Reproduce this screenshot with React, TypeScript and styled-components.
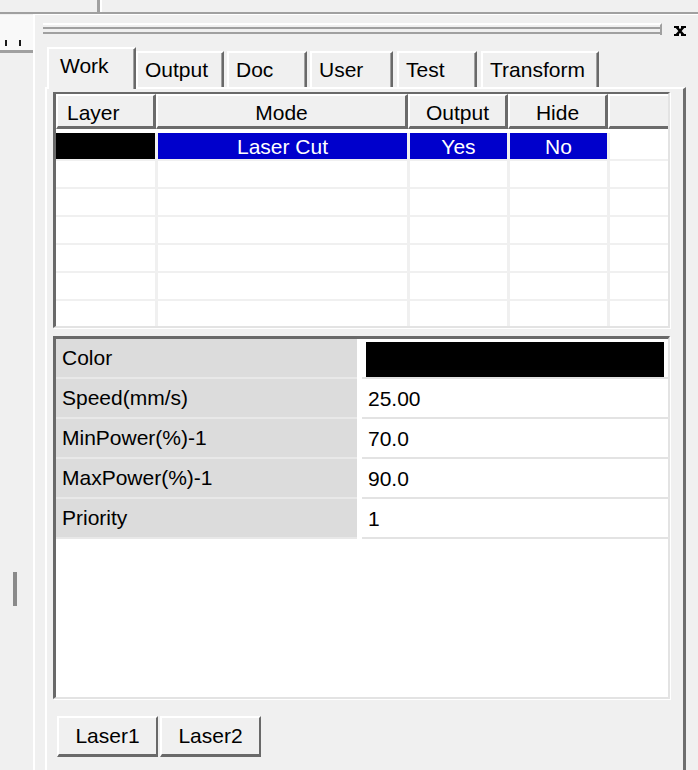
import styled, { createGlobalStyle } from 'styled-components';

const GlobalStyle = createGlobalStyle`
  html, body {
    margin: 0;
    padding: 0;
    background: #f0f0f0;
  }
  body {
    font-family: 'Liberation Sans', Arial, sans-serif;
    font-size: 21px;
    color: #000;
  }
  * {
    box-sizing: border-box;
  }
`;

const Page = styled.div`
  width: 698px;
  height: 770px;
  overflow: hidden;
  background: #f0f0f0;
  display: flex;
  flex-direction: column;
`;

const TopStrip = styled.div`
  height: 14px;
  flex-shrink: 0;
  display: flex;
  border-bottom: 2px solid #a0a0a0;
`;

const TopLeft = styled.div`
  width: 100px;
  border-right: 3px solid #a0a0a0;
`;

const TopRight = styled.div`
  flex: 1;
  border-left: 2px solid #fff;
`;

const Body = styled.div`
  flex: 1;
  min-height: 0;
  display: flex;
`;

const LeftPane = styled.div`
  width: 33px;
  flex-shrink: 0;
  display: flex;
  flex-direction: column;
`;

const Ruler = styled.div`
  margin-top: 1px;
  height: 38px;
  background: #f9f9f9;
  border-bottom: 3px solid #a0a0a0;
  display: flex;
  align-items: flex-end;
  gap: 12px;
  padding: 0 0 4px 5px;
`;

const Tick = styled.span`
  width: 2px;
  height: 6px;
  background: #1a1a1a;
`;

const Thumb = styled.div`
  margin: 519px 0 0 13px;
  width: 4px;
  height: 34px;
  background: #8a8a8a;
`;

const Dock = styled.div`
  flex: 1;
  min-width: 0;
  display: flex;
  flex-direction: column;
  border-left: 2px solid #fff;
  border-top: 1px solid #fff;
  padding: 8px 12px 0 8px;
`;

const GripRow = styled.div`
  display: flex;
  align-items: flex-start;
  height: 12px;
  flex-shrink: 0;
`;

const Grip = styled.div`
  flex: 1;
  height: 12px;
  border-top: 2px solid #fff;
  border-right: 2px solid #a0a0a0;
  padding-top: 2px;
  display: flex;
  flex-direction: column;
  gap: 3px;
`;

const GripLine = styled.div`
  height: 2px;
  background: #a0a0a0;
`;

const Close = styled.svg`
  margin: 3px 0 0 12px;
  width: 12px;
  height: 10px;
  flex-shrink: 0;
`;

const TabArea = styled.div`
  margin: 12px 0 0 2px;
  flex: 1;
  min-height: 0;
  display: flex;
  flex-direction: column;
`;

const TabBar = styled.div`
  height: 40px;
  flex-shrink: 0;
  display: flex;
  align-items: flex-end;
  padding-left: 2px;
`;

const Tab = styled.div<{ $active?: boolean; $w: number; $gap: number }>`
  position: relative;
  z-index: 1;
  width: ${({ $w }) => $w}px;
  height: ${({ $active }) => ($active ? 42 : 36)}px;
  margin-left: ${({ $gap }) => $gap}px;
  margin-bottom: ${({ $active }) => ($active ? -2 : 0)}px;
  background: #f0f0f0;
  border-top: 2px solid #fff;
  border-left: 2px solid #fff;
  border-right: 2px solid #696969;
  box-shadow: inset -1px 0 0 #a0a0a0;
  padding: 5px 0 0 ${({ $active }) => ($active ? 11 : 7)}px;
  line-height: 24px;
  white-space: nowrap;
`;

const TabPage = styled.div`
  flex: 1;
  min-height: 0;
  display: flex;
  flex-direction: column;
  border-top: 2px solid #fff;
  border-left: 2px solid #fff;
  border-right: 3px solid #6e6e6e;
  padding: 3px 13px 0 6px;
`;

const Grid = styled.div`
  height: 236px;
  flex-shrink: 0;
  overflow: hidden;
  background: #fff;
  border-left: 3px solid #696969;
  border-top: 2px solid #696969;
  border-right: 2px solid #e3e3e3;
  border-bottom: 2px solid #e3e3e3;
  box-shadow: 1px 1px 0 #fff;
  display: flex;
  flex-direction: column;
`;

const HeaderRow = styled.div`
  display: flex;
  height: 35px;
  flex-shrink: 0;
`;

const HeaderCell = styled.div<{ $w: number; $left?: boolean; $last?: boolean }>`
  width: ${({ $w }) => $w}px;
  flex-shrink: 0;
  background: #f0f0f0;
  border-top: 2px solid #fff;
  border-left: 2px solid #fff;
  border-right: ${({ $last }) => ($last ? 'none' : '3px solid #6b6b6b')};
  border-bottom: 3px solid #6b6b6b;
  display: flex;
  align-items: center;
  justify-content: ${({ $left }) => ($left ? 'flex-start' : 'center')};
  padding: 3px 0 0 ${({ $left }) => ($left ? 9 : 0)}px;
`;

const DataArea = styled.div`
  padding-top: 4px;
  background: #fff;
`;

const Row = styled.div`
  display: flex;
  height: 28px;
`;

const Cell = styled.div<{ $w: number; $bg?: string; $first?: boolean; $last?: boolean }>`
  width: ${({ $w }) => $w}px;
  flex-shrink: 0;
  height: 28px;
  background: ${({ $bg }) => $bg || '#fff'};
  color: #fff;
  border-bottom: 2px solid #f0f0f0;
  border-left: ${({ $first }) => ($first ? 'none' : '2px solid #f0f0f0')};
  border-right: ${({ $last }) => ($last ? 'none' : '1px solid #f0f0f0')};
  text-align: center;
  line-height: 27px;
`;

const PropGrid = styled.div`
  margin-top: 8px;
  height: 363px;
  flex-shrink: 0;
  background: #fff;
  border-left: 3px solid #696969;
  border-top: 3px solid #696969;
  border-right: 2px solid #e3e3e3;
  border-bottom: 2px solid #e3e3e3;
  box-shadow: 1px 1px 0 #fff;
`;

const PropRow = styled.div`
  display: flex;
  height: 40px;
`;

const PropLabel = styled.div`
  width: 301px;
  flex-shrink: 0;
  background: #dcdcdc;
  border-bottom: 2px solid #e8e8e8;
  padding-left: 6px;
  display: flex;
  align-items: center;
`;

const PropValue = styled.div<{ $swatch?: boolean }>`
  flex: 1;
  margin-left: 5px;
  border-bottom: 2px solid #e3e3e3;
  padding: ${({ $swatch }) => ($swatch ? '3px 4px 0 4px' : '1px 0 0 6px')};
  display: flex;
  align-items: ${({ $swatch }) => ($swatch ? 'stretch' : 'center')};
`;

const Swatch = styled.div<{ $color: string }>`
  flex: 1;
  background: ${({ $color }) => $color};
`;

const ButtonRow = styled.div`
  margin-top: 17px;
  padding-left: 4px;
  display: flex;
  gap: 2px;
  flex-shrink: 0;
`;

const Button = styled.button`
  width: 101px;
  height: 41px;
  padding: 0;
  background: #f0f0f0;
  border-top: 2px solid #fff;
  border-left: 2px solid #fff;
  border-right: 2px solid #696969;
  border-bottom: 3px solid #696969;
  font: inherit;
  color: #000;
  text-align: center;
`;

const tabs = [
  { label: 'Work', w: 89, gap: 0, active: true },
  { label: 'Output', w: 88, gap: 0 },
  { label: 'Doc', w: 80, gap: 3 },
  { label: 'User', w: 83, gap: 3 },
  { label: 'Test', w: 80, gap: 4 },
  { label: 'Transform', w: 118, gap: 4 },
];

const columns = [
  { label: 'Layer', w: 100, left: true },
  { label: 'Mode', w: 252 },
  { label: 'Output', w: 100 },
  { label: 'Hide', w: 100 },
  { label: '', w: 60, last: true },
];

const selected = [
  { text: '', bg: '#000' },
  { text: 'Laser Cut', bg: '#0000cc' },
  { text: 'Yes', bg: '#0000cc' },
  { text: 'No', bg: '#0000cc' },
  { text: '', bg: '#fff' },
];

const props = [
  { label: 'Color', swatch: '#000' },
  { label: 'Speed(mm/s)', value: '25.00' },
  { label: 'MinPower(%)-1', value: '70.0' },
  { label: 'MaxPower(%)-1', value: '90.0' },
  { label: 'Priority', value: '1' },
];

const CloseIcon = () => (
  <Close viewBox="0 0 12 10">
    <rect x="0" y="0" width="5" height="2" fill="#000" />
    <rect x="7" y="0" width="5" height="2" fill="#000" />
    <rect x="0" y="8" width="5" height="2" fill="#000" />
    <rect x="7" y="8" width="5" height="2" fill="#000" />
    <path d="M2.5 1 L9.5 9 M9.5 1 L2.5 9" stroke="#000" strokeWidth="2.6" />
  </Close>
);

export default function App() {
  const emptyRows = [1, 2, 3, 4, 5, 6];
  return (
    <Page>
      <GlobalStyle />
      <TopStrip>
        <TopLeft />
        <TopRight />
      </TopStrip>
      <Body>
        <LeftPane>
          <Ruler>
            <Tick />
            <Tick />
          </Ruler>
          <Thumb />
        </LeftPane>
        <Dock>
          <GripRow>
            <Grip>
              <GripLine />
              <GripLine />
            </Grip>
            <CloseIcon />
          </GripRow>
          <TabArea>
            <TabBar>
              {tabs.map((t) => (
                <Tab key={t.label} $active={t.active} $w={t.w} $gap={t.gap}>
                  {t.label}
                </Tab>
              ))}
            </TabBar>
            <TabPage>
              <Grid>
                <HeaderRow>
                  {columns.map((c, i) => (
                    <HeaderCell key={i} $w={c.w} $left={c.left} $last={c.last}>
                      {c.label}
                    </HeaderCell>
                  ))}
                </HeaderRow>
                <DataArea>
                  <Row>
                    {columns.map((c, i) => (
                      <Cell
                        key={i}
                        $w={c.w}
                        $bg={selected[i].bg}
                        $first={i === 0}
                        $last={c.last}
                      >
                        {selected[i].text}
                      </Cell>
                    ))}
                  </Row>
                  {emptyRows.map((r) => (
                    <Row key={r}>
                      {columns.map((c, i) => (
                        <Cell key={i} $w={c.w} $first={i === 0} $last={c.last} />
                      ))}
                    </Row>
                  ))}
                </DataArea>
              </Grid>
              <PropGrid>
                {props.map((p) => (
                  <PropRow key={p.label}>
                    <PropLabel>{p.label}</PropLabel>
                    {p.swatch ? (
                      <PropValue $swatch>
                        <Swatch $color={p.swatch} />
                      </PropValue>
                    ) : (
                      <PropValue>{p.value}</PropValue>
                    )}
                  </PropRow>
                ))}
              </PropGrid>
              <ButtonRow>
                <Button>Laser1</Button>
                <Button>Laser2</Button>
              </ButtonRow>
            </TabPage>
          </TabArea>
        </Dock>
      </Body>
    </Page>
  );
}
